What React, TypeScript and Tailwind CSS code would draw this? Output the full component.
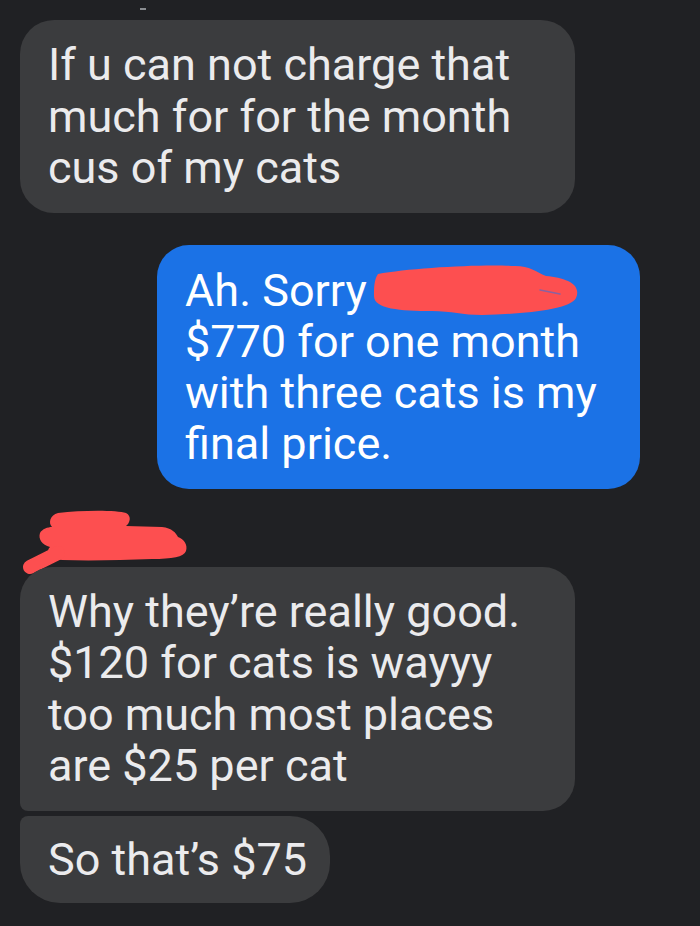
import React from 'react';

const font = { fontFamily: 'Roboto, "Liberation Sans", sans-serif' };

// 받은 메시지 말풍선
const Incoming: React.FC<{ className?: string; children: React.ReactNode }> = ({ className = '', children }) => (
  <div
    className={`bg-[#3b3c3e] text-[#ebebed] text-[45px] leading-[51.5px] pl-7 pr-4 whitespace-nowrap ${className}`}
  >
    {children}
  </div>
);

// 이름 가리기 낙서
const NameScribble = () => (
  <svg width="170" height="70" viewBox="0 0 170 70" className="block ml-[2px]">
    <path
      d="M 36 6 C 60 3, 95 3, 104 6 C 110 9, 108 16, 104 19 L 140 20 C 150 21, 154 26, 156 30 C 162 32, 166 38, 164 44 C 162 50, 150 52, 130 52 C 100 53, 70 54, 40 53 L 34 52 C 26 50, 24 44, 28 40 C 20 38, 16 32, 18 26 C 20 22, 26 20, 30 20 C 26 16, 28 8, 36 6 Z"
      fill="#fd4f50"
    />
    <line x1="8" y1="60" x2="36" y2="46" stroke="#fd4f50" strokeWidth="14" strokeLinecap="round" />
  </svg>
);

const SorryScribble = () => (
  <svg
    width="212"
    height="58"
    viewBox="0 0 212 58"
    className="absolute left-[213px] top-[17px]"
  >
    <path
      d="M 8 12 C 40 6, 110 2, 145 4 C 160 4, 166 10, 176 14 C 196 16, 212 22, 206 36 C 200 48, 152 52, 112 53 C 92 53, 82 49, 62 49 C 30 49, 4 47, 4 34 C 4 26, 4 18, 8 12 Z"
      fill="#fd4f50"
    />
    <path d="M 170 28 L 190 32" stroke="#3d6fd8" strokeWidth="1.5" strokeLinecap="round" opacity="0.6" />
  </svg>
);

const App: React.FC = () => {
  return (
    <div className="w-[700px] h-[926px] bg-[#202124] overflow-hidden" style={font}>
      <div className="h-[20px] pl-[140px] pt-[8px]">
        <div className="w-[6px] h-[2px] bg-[#8a8d91]" />
      </div>

      <div className="px-5">
        <Incoming className="w-[555px] rounded-[34px] pt-[19px] pb-[19px]">
          <div>If u can not charge that</div>
          <div>much for for the month</div>
          <div>cus of my cats</div>
        </Incoming>
      </div>

      <div className="flex justify-end pr-[60px] mt-[32px]">
        <div className="relative w-[483px] bg-[#1b72e6] text-white text-[45px] leading-[51px] rounded-[32px] pl-7 pr-4 pt-[20px] pb-[20px] whitespace-nowrap">
          <div>Ah. Sorry</div>
          <div>$770 for one month</div>
          <div>with three cats is my</div>
          <div>final price.</div>
          <SorryScribble />
        </div>
      </div>

      <div className="h-[78px] px-5 pt-[18px]">
        <NameScribble />
      </div>

      <div className="px-5 flex flex-col gap-[5px]">
        <Incoming className="w-[555px] rounded-[32px] rounded-bl-[8px] pt-[19px] pb-[19px]">
          <div>Why they’re really good.</div>
          <div>$120 for cats is wayyy</div>
          <div>too much most places</div>
          <div>are $25 per cat</div>
        </Incoming>
        <Incoming className="w-[310px] rounded-[40px] rounded-tl-[8px] py-[18px]">
          <div>So that’s $75</div>
        </Incoming>
      </div>
    </div>
  );
};

export default App;
